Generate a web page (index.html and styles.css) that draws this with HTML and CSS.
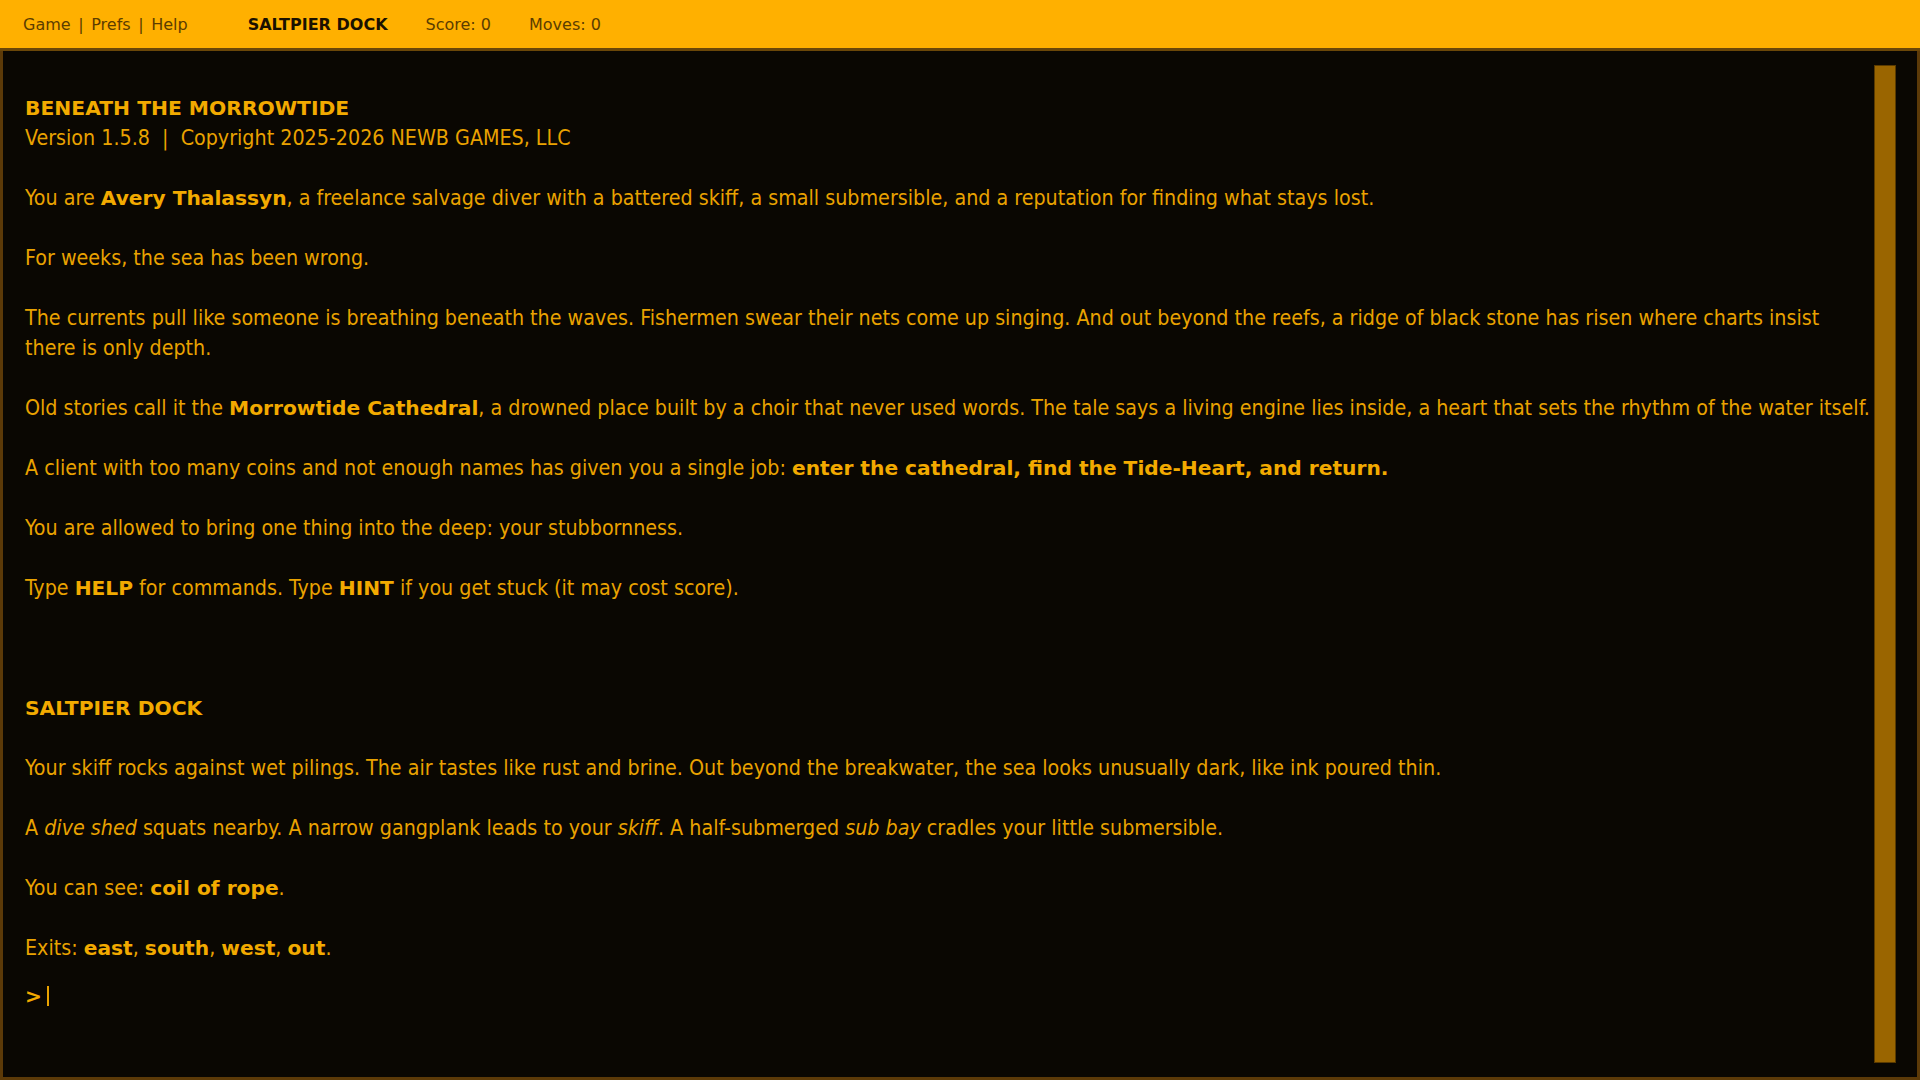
FILE: index.html
```html
<!DOCTYPE html>
<html lang="en">
<head>
  <meta charset="UTF-8">
  <title>Beneath the Morrowtide</title>
  <link rel="stylesheet" href="styles.css">
</head>
<body>
  <header class="topbar">
    <nav class="menu">Game | Prefs | Help</nav>
    <span class="room-name">SALTPIER DOCK</span>
    <span class="stat">Score: 0</span>
    <span class="stat">Moves: 0</span>
  </header>
  <main class="screen">
    <div class="output">
      <div class="title">BENEATH THE MORROWTIDE</div>
      <p class="version">Version 1.5.8 &nbsp;|&nbsp; Copyright 2025-2026 NEWB GAMES, LLC</p>
      <p>You are <b>Avery Thalassyn</b>, a freelance salvage diver with a battered skiff, a small submersible, and a reputation for finding what stays lost.</p>
      <p>For weeks, the sea has been wrong.</p>
      <p>The currents pull like someone is breathing beneath the waves. Fishermen swear their nets come up singing. And out beyond the reefs, a ridge of black stone has risen where charts insist there is only depth.</p>
      <p>Old stories call it the <b>Morrowtide Cathedral</b>, a drowned place built by a choir that never used words. The tale says a living engine lies inside, a heart that sets the rhythm of the water itself.</p>
      <p>A client with too many coins and not enough names has given you a single job: <b>enter the cathedral, find the Tide-Heart, and return.</b></p>
      <p>You are allowed to bring one thing into the deep: your stubbornness.</p>
      <p>Type <b>HELP</b> for commands. Type <b>HINT</b> if you get stuck (it may cost score).</p>

      <div class="room">
        <div class="title">SALTPIER DOCK</div>
        <p>Your skiff rocks against wet pilings. The air tastes like rust and brine. Out beyond the breakwater, the sea looks unusually dark, like ink poured thin.</p>
        <p>A <i>dive shed</i> squats nearby. A narrow gangplank leads to your <i>skiff</i>. A half-submerged <i>sub bay</i> cradles your little submersible.</p>
        <p>You can see: <b>coil of rope</b>.</p>
        <p>Exits: <b>east</b>, <b>south</b>, <b>west</b>, <b>out</b>.</p>
      </div>

      <div class="prompt"><b>&gt;</b><span class="caret"></span></div>
    </div>
    <div class="scrollbar"><div class="thumb"></div></div>
  </main>
</body>
</html>
```

FILE: styles.css
```css
html, body { height:100%; }
body { margin:0; background:#0a0702; font-family:"DejaVu Sans", sans-serif; color:#e9a200; display:flex; flex-direction:column; overflow:hidden; }

.topbar { height:48px; flex:none; background:#ffb000; border-bottom:3px solid #6b4708; display:flex; align-items:center; gap:38px; padding:0 23px; font-size:16px; color:#5c3d00; }
.menu { margin-right:22px; word-spacing:2.5px; }
.room-name { font-weight:bold; color:#1a1100; }

.screen { flex:1; min-height:0; display:flex; border:3px solid #5c3a08; border-top:none; }
.output { flex:1; padding:42px 0 0 22px; font-family:"DejaVu Sans Condensed", "DejaVu Sans", sans-serif; font-size:21.28px; line-height:30px; overflow:hidden; }
.output p { margin:0 0 30px; }
.output b, .title { font-family:"DejaVu Sans", sans-serif; font-size:20.2px; font-weight:bold; color:#f2aa00; }
.output .title { font-size:20.3px; }
.room { margin-top:90px; }
.room .title { margin-bottom:30px; }

.prompt { display:flex; align-items:center; height:30px; margin-top:-12px; }
.caret { display:inline-block; width:2px; height:20px; background:#e9a200; margin-left:5px; }

.scrollbar { width:22px; flex:none; margin:14px 21px 14px 0; }
.thumb { height:100%; box-sizing:border-box; background:#9a6500; border:1px solid #5a3a00; }
```
